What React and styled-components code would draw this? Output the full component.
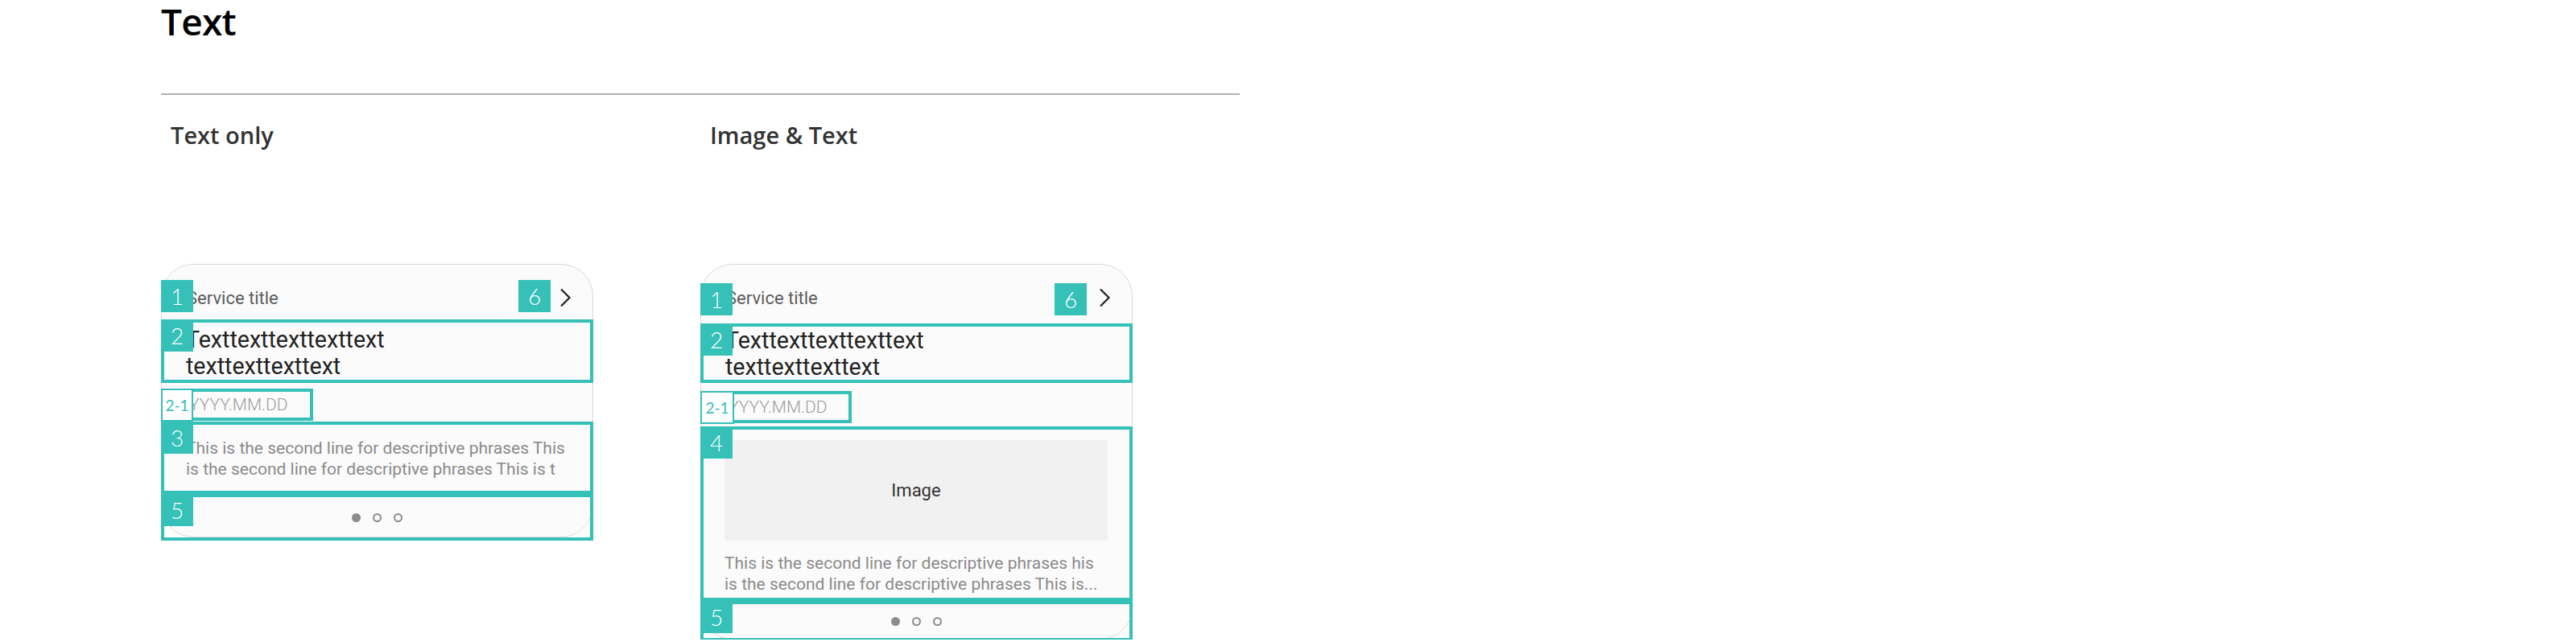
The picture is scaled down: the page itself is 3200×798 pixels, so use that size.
import React from "react";
import styled, { createGlobalStyle } from "styled-components";

const TEAL = "#35c0b8";

const GlobalStyle = createGlobalStyle`
  html, body {
    margin: 0;
    padding: 0;
    background: #fff;
    overflow: hidden;
  }
  body {
    font-family: Roboto, "Liberation Sans", sans-serif;
  }
`;

export default function App() {
  return (
    <>
      <GlobalStyle />
      <Page>
        <Title>Text</Title>
        <Rule />
        <Columns>
          <Column>
            <Subhead>Text only</Subhead>
            <Card>
              <Header $h={68}>
                <Badge $top={19} $left={-1}>1</Badge>
                <ServiceTitle>Service title</ServiceTitle>
                <Badge $top={19} $right={52}>6</Badge>
                <Chevron />
              </Header>
              <Box $h={79}>
                <Badge $top={-4} $left={-4}>2</Badge>
                <Headline $pt={5}>
                  <Line>Texttexttexttexttext</Line>
                  <Line>texttexttexttext</Line>
                </Headline>
              </Box>
              <DateRow $h={48} $pt={7}>
                <Label $w={40}>2-1</Label>
                <DateBox>
                  <DateText $shift={-5}>YYYY.MM.DD</DateText>
                </DateBox>
              </DateRow>
              <Box $h={90}>
                <Badge $top={-4} $left={-4}>3</Badge>
                <Description $pt={16} $pl={27}>
                  <Line>This is the second line for descriptive phrases This</Line>
                  <Line>is the second line for descriptive phrases This is t</Line>
                </Description>
              </Box>
              <Box $h={58} $mb={-5} $center>
                <Badge $top={-4} $left={-4}>5</Badge>
                <Pager />
              </Box>
            </Card>
          </Column>

          <Column>
            <Subhead>Image &amp; Text</Subhead>
            <Card>
              <Header $h={73}>
                <Badge $top={23} $left={-1}>1</Badge>
                <ServiceTitle>Service title</ServiceTitle>
                <Badge $top={23} $right={56}>6</Badge>
                <Chevron />
              </Header>
              <Box $h={74}>
                <Badge $top={-4} $left={-4}>2</Badge>
                <Headline $pt={1}>
                  <Line>Texttexttexttexttext</Line>
                  <Line>texttexttexttext</Line>
                </Headline>
              </Box>
              <DateRow $h={54} $pt={10}>
                <Label $w={42}>2-1</Label>
                <DateBox $w={146}>
                  <DateText $shift={-7}>YYYY.MM.DD</DateText>
                </DateBox>
              </DateRow>
              <Box $h={217}>
                <Badge $top={-4} $left={-4}>4</Badge>
                <Media>
                  <ImageHolder>Image</ImageHolder>
                  <Description $pt={15} $pl={0}>
                    <Line>This is the second line for descriptive phrases his</Line>
                    <Line>is the second line for descriptive phrases This is...</Line>
                  </Description>
                </Media>
              </Box>
              <Box $h={50} $mb={-3} $center>
                <Badge $top={-4} $left={-4}>5</Badge>
                <Pager />
              </Box>
            </Card>
          </Column>
        </Columns>
      </Page>
    </>
  );
}

const Chevron = () => (
  <ChevronSvg viewBox="0 0 15 24" width="15" height="24">
    <path d="M2 1.5 L12.5 12 L2 22.5" fill="none" stroke="#222" strokeWidth="2.2" />
  </ChevronSvg>
);

const Pager = () => (
  <Dots>
    <Dot $on />
    <Dot />
    <Dot />
  </Dots>
);

const Page = styled.div`
  width: 1340px;
  padding-left: 200px;
`;

const Title = styled.h1`
  margin: 0;
  font-family: "Open Sans", "Noto Sans", sans-serif;
  font-weight: 600;
  font-size: 46px;
  line-height: 52px;
  letter-spacing: -0.8px;
  color: #000;
`;

const Rule = styled.div`
  height: 2px;
  margin-top: 64px;
  background: #b0b0b0;
`;

const Columns = styled.div`
  display: flex;
  gap: 133px;
  margin-top: 30px;
`;

const Column = styled.section`
  width: 537px;
  display: flex;
  flex-direction: column;
`;

const Subhead = styled.h2`
  margin: 0;
  padding-left: 12px;
  font-family: "Open Sans", "Noto Sans", sans-serif;
  font-weight: 600;
  font-size: 29px;
  line-height: 40px;
  color: #333;
`;

const Card = styled.div`
  position: relative;
  box-sizing: border-box;
  width: 537px;
  margin-top: 140px;
  display: flex;
  flex-direction: column;
  border: 1px solid #d9d9d9;
  border-radius: 40px;
  background: #fbfbfb;
`;

const Header = styled.div`
  position: relative;
  box-sizing: border-box;
  height: ${(p) => p.$h}px;
  padding: 19px 26px 0 31px;
  display: flex;
  align-items: flex-start;
`;

const ServiceTitle = styled.div`
  flex: 1;
  padding-top: 3px;
  font-size: 22px;
  line-height: 40px;
  color: #5c5c5c;
`;

const ChevronSvg = styled.svg`
  display: block;
  margin-top: 10px;
`;

const Badge = styled.div`
  position: absolute;
  top: ${(p) => p.$top}px;
  ${(p) => (p.$right !== undefined ? `right: ${p.$right}px;` : `left: ${p.$left}px;`)}
  z-index: 2;
  width: 40px;
  height: 40px;
  display: flex;
  align-items: center;
  justify-content: center;
  background: ${TEAL};
  color: #fff;
  font-family: Lato, "Open Sans", sans-serif;
  font-weight: 300;
  font-size: 28px;
  line-height: 1;
`;

const Box = styled.div`
  position: relative;
  box-sizing: border-box;
  height: ${(p) => p.$h}px;
  margin: 0 -1px ${(p) => p.$mb || 0}px;
  border: 4px solid ${TEAL};
  ${(p) =>
    p.$center &&
    `
    display: flex;
    align-items: center;
    justify-content: center;
  `}
`;

const Line = styled.span`
  display: block;
  white-space: nowrap;
  overflow: hidden;
`;

const Headline = styled.div`
  padding: ${(p) => p.$pt}px 0 0 27px;
  font-size: 28.6px;
  line-height: 33px;
  color: #222;
`;

const DateRow = styled.div`
  box-sizing: border-box;
  height: ${(p) => p.$h}px;
  margin: 0 -1px;
  padding-top: ${(p) => p.$pt}px;
  display: flex;
  align-items: flex-start;
`;

const Label = styled.div`
  position: relative;
  z-index: 1;
  box-sizing: border-box;
  width: ${(p) => p.$w}px;
  height: 41px;
  display: flex;
  align-items: center;
  justify-content: center;
  border: 2px solid ${TEAL};
  background: #fff;
  color: ${TEAL};
  font-family: Lato, "Open Sans", sans-serif;
  font-size: 19px;
`;

const DateBox = styled.div`
  box-sizing: border-box;
  width: ${(p) => p.$w || 149}px;
  height: 40px;
  display: flex;
  align-items: center;
  border: 4px solid ${TEAL};
  border-left: 0;
`;

const DateText = styled.span`
  margin-left: ${(p) => p.$shift}px;
  font-weight: 300;
  font-size: 21px;
  color: #9c9c9c;
  white-space: nowrap;
`;

const Description = styled.div`
  padding: ${(p) => p.$pt}px 0 0 ${(p) => p.$pl}px;
  font-size: 21px;
  line-height: 26px;
  color: #8a8a8a;
`;

const Media = styled.div`
  padding: 13px 27px 0 26px;
`;

const ImageHolder = styled.div`
  height: 125px;
  display: flex;
  align-items: center;
  justify-content: center;
  background: #f1f1f1;
  font-size: 22px;
  color: #333;
`;

const Dots = styled.div`
  display: flex;
  gap: 15px;
`;

const Dot = styled.span`
  box-sizing: border-box;
  width: 11px;
  height: 11px;
  border-radius: 50%;
  border: 2px solid #8c8c8c;
  background: ${(p) => (p.$on ? "#8c8c8c" : "transparent")};
`;
